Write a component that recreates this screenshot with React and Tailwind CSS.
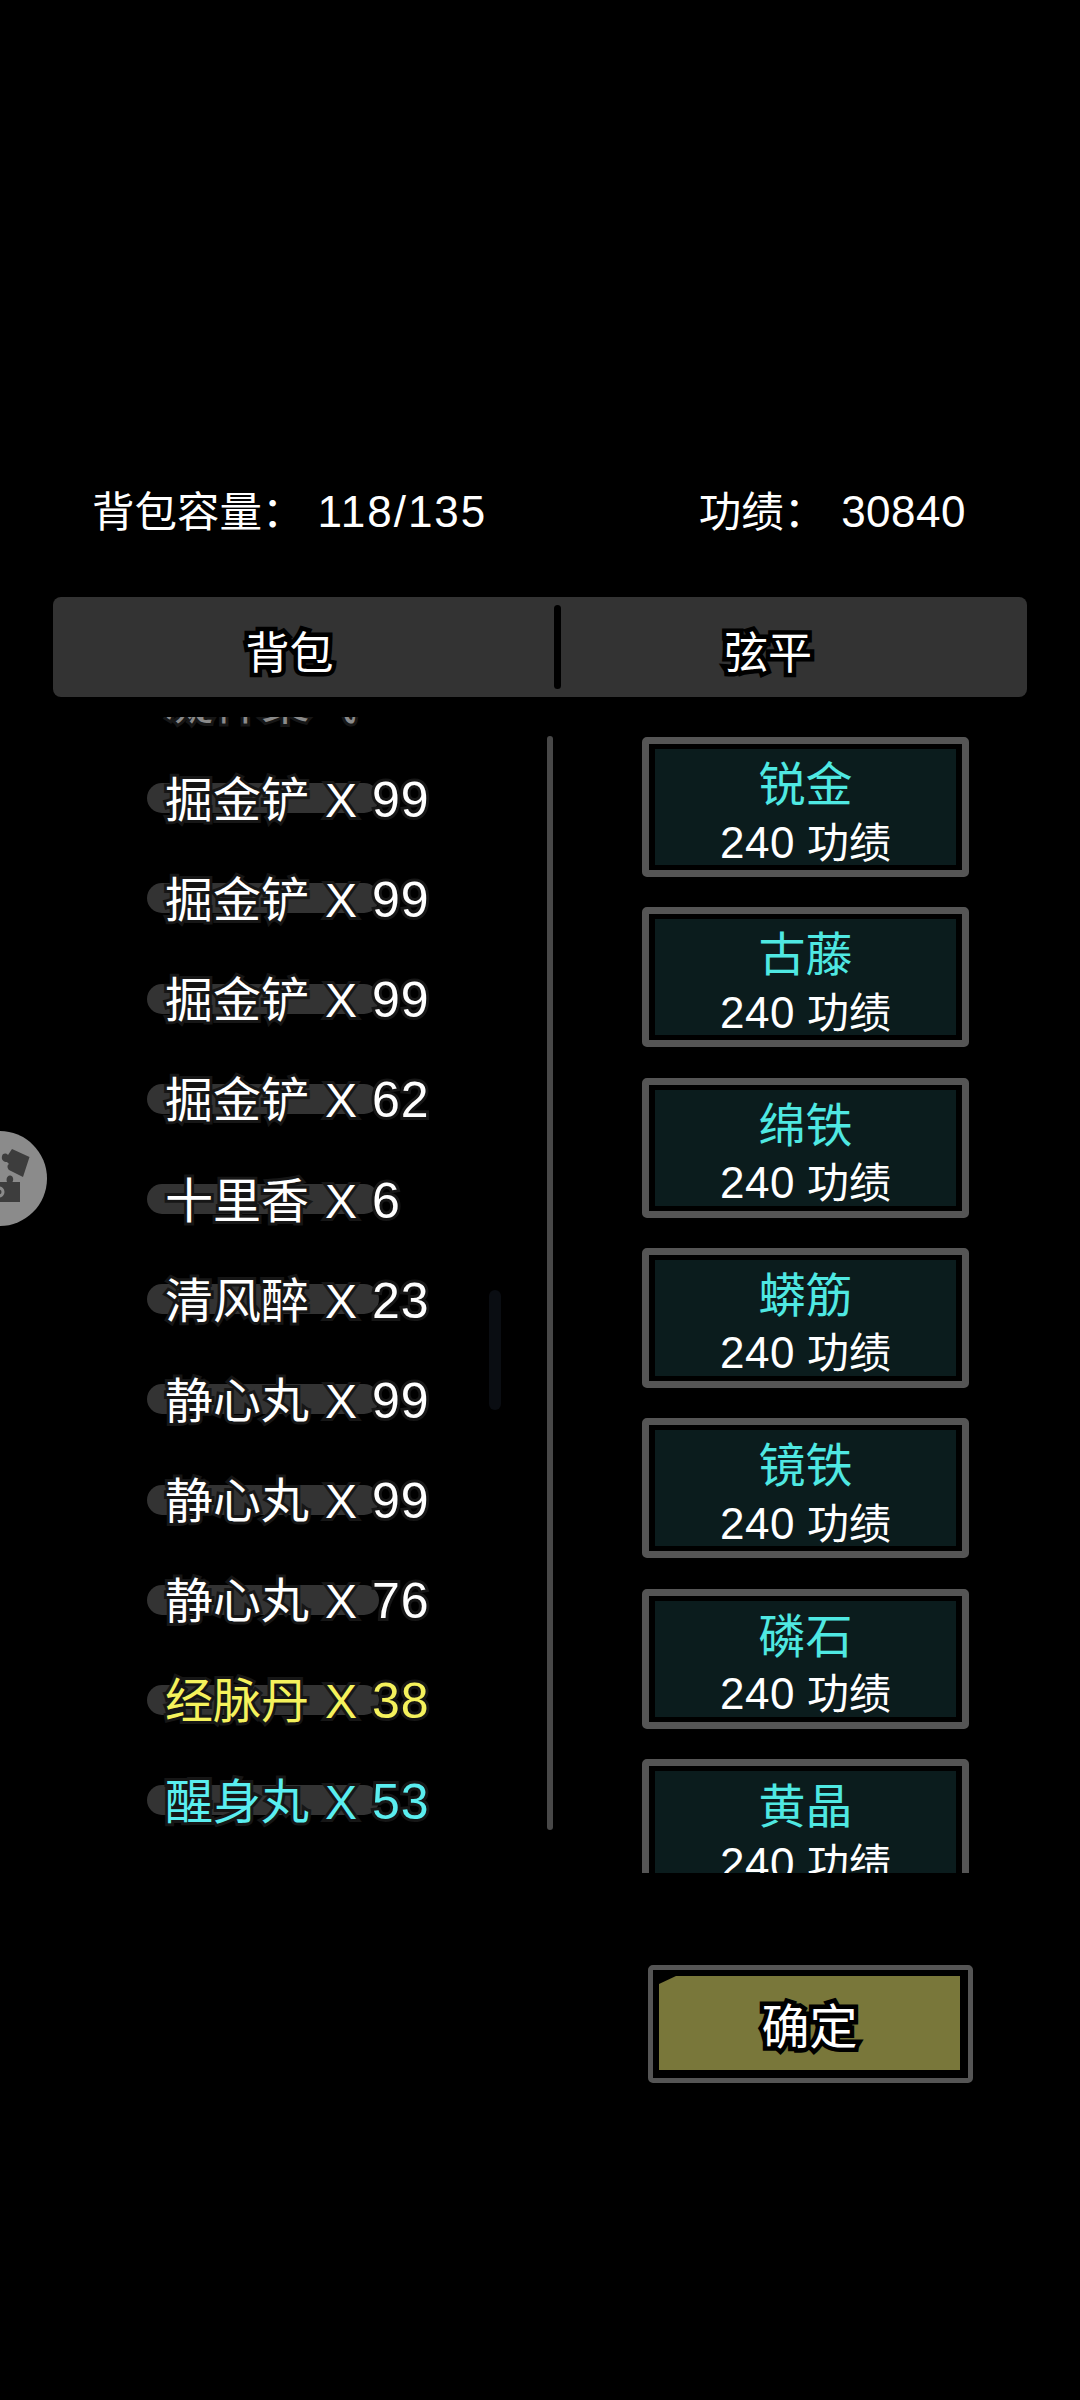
const items = [
  { name: "凝神聚气", qty: "", color: "text-[#8a8a8a]" },
  { name: "掘金铲", qty: "99", color: "text-white" },
  { name: "掘金铲", qty: "99", color: "text-white" },
  { name: "掘金铲", qty: "99", color: "text-white" },
  { name: "掘金铲", qty: "62", color: "text-white" },
  { name: "十里香", qty: "6", color: "text-white" },
  { name: "清风醉", qty: "23", color: "text-white" },
  { name: "静心丸", qty: "99", color: "text-white" },
  { name: "静心丸", qty: "99", color: "text-white" },
  { name: "静心丸", qty: "76", color: "text-white" },
  { name: "经脉丹", qty: "38", color: "text-[#f5f25c]" },
  { name: "醒身丸", qty: "53", color: "text-[#5aeef0]" },
];

const recipes = ["锐金", "古藤", "绵铁", "蟒筋", "镜铁", "磷石", "黄晶"];

function Row({ item }) {
  return (
    <div className="relative h-[100.2px] shrink-0 flex items-center pl-[165px]">
      <div className="absolute left-[147px] top-[35px] h-[30px] w-[232px] rounded-full bg-[#333333]" />
      <div className={`relative flex items-baseline whitespace-nowrap [-webkit-text-stroke:6px_#161616] [paint-order:stroke_fill] ${item.color}`}>
        <span className="text-[48px] leading-[60px]">{item.name}</span>
        {item.qty && (
          <span className="text-[48px] leading-[60px] ml-[16px] font-['Liberation_Sans',sans-serif]">X</span>
        )}
        {item.qty && (
          <span className="text-[50px] leading-[60px] ml-[15px] tracking-[1px] font-['Liberation_Sans',sans-serif]">{item.qty}</span>
        )}
      </div>
    </div>
  );
}

function Recipe({ name }) {
  return (
    <div className="h-[140px] shrink-0 rounded-[5px] border-[7px] border-[#555555] bg-black px-[6px] pt-[5px] pb-[5px]">
      <div className="h-full bg-[#0b1c1d] flex flex-col items-center pt-[2px]">
        <div className="text-[47px] leading-[59.5px] text-[#4fe8e2]">{name}</div>
        <div className="flex items-baseline gap-[12px] leading-[58px] text-white whitespace-nowrap">
          <span className="text-[44px] tracking-[0.5px] font-['Liberation_Sans',sans-serif]">240</span>
          <span className="text-[42px]">功绩</span>
        </div>
      </div>
    </div>
  );
}

export default function App() {
  return (
    <div className="relative w-[1080px] h-[2400px] overflow-hidden bg-black pt-[481px] font-['Noto_Sans_CJK_SC',sans-serif] text-white">
      {/* header */}
      <div className="flex justify-between items-baseline h-[56px] pl-[92px] pr-[114px] leading-[56px]">
        <div className="flex items-baseline whitespace-nowrap">
          <span className="text-[42.5px]">背包容量：</span>
          <span className="text-[44px] ml-[13px] tracking-[2px] font-['Liberation_Sans',sans-serif]">118/135</span>
        </div>
        <div className="flex items-baseline whitespace-nowrap">
          <span className="text-[42.5px]">功绩：</span>
          <span className="text-[44px] ml-[15px] tracking-[0.5px] font-['Liberation_Sans',sans-serif]">30840</span>
        </div>
      </div>

      {/* tabs */}
      <div className="mt-[60px] ml-[53px] w-[974px] h-[100px] rounded-[8px] bg-[#333333] flex items-center">
        <div className="w-[501px] text-center text-[44px] leading-[60px] pt-[5px] pr-[28px] [-webkit-text-stroke:9px_#000] [paint-order:stroke_fill]">背包</div>
        <div className="w-[7px] h-[84px] rounded-full bg-black" />
        <div className="flex-1 text-center text-[44px] leading-[60px] pt-[5px] pr-[52px] [-webkit-text-stroke:9px_#000] [paint-order:stroke_fill]">弦平</div>
      </div>

      {/* body */}
      <div className="mt-[20px] flex items-start">
        <div className="relative w-[547px] h-[1118px] overflow-hidden">
          <div className="-mt-[69px] flex flex-col">
            {items.map((item, i) => (
              <Row key={i} item={item} />
            ))}
          </div>
          <div className="absolute left-[489px] top-[573px] h-[120px] w-[12px] rounded-full bg-[#0a0d12]" />
        </div>
        <div className="mt-[19px] w-[6px] h-[1094px] rounded-full bg-[#484848]" />
        <div className="ml-[89px] mt-[20px] w-[327px] h-[1136px] overflow-hidden flex flex-col gap-[30.33px]">
          {recipes.map((r) => (
            <Recipe key={r} name={r} />
          ))}
        </div>
      </div>

      {/* confirm */}
      <div className="mt-[92px] ml-[648px] w-[325px] h-[118px] rounded-[5px] border-[5px] border-[#555555] bg-black pl-[6px] pt-[6px] pr-[8px] pb-[8px]">
        <div className="h-full bg-[#79773a] [clip-path:polygon(17px_0,100%_0,100%_100%,0_100%,0_8px)] flex items-center justify-center">
          <span className="text-[48px] leading-[60px] [-webkit-text-stroke:9px_#000] [paint-order:stroke_fill]">确定</span>
        </div>
      </div>

      {/* floating button */}
      <div className="absolute left-[-48px] top-[1131px] w-[95px] h-[95px] rounded-full bg-[#8b8b8b]">
        <svg className="absolute left-[48px] top-[-11px]" width="40" height="120" viewBox="0 0 40 120">
          <path d="M12 29 L29.5 37 L23 57 L9 50 C7 48 7 45 9 44 L7 42 C4 42 1 40 2 36 C3 33 6 33 8 35 Z" fill="#3d3d3d" />
          <path d="M-2 62 L7 62 C5.5 58 8 55 10.5 55.5 C13 56 14 59 12.5 62 L20 62 L20 82 L-2 82 Z" fill="#3d3d3d" />
          <circle cx="-1" cy="72" r="5.5" fill="#8b8b8b" />
          <circle cx="-1" cy="72" r="2.5" fill="#3d3d3d" />
        </svg>
      </div>
    </div>
  );
}
